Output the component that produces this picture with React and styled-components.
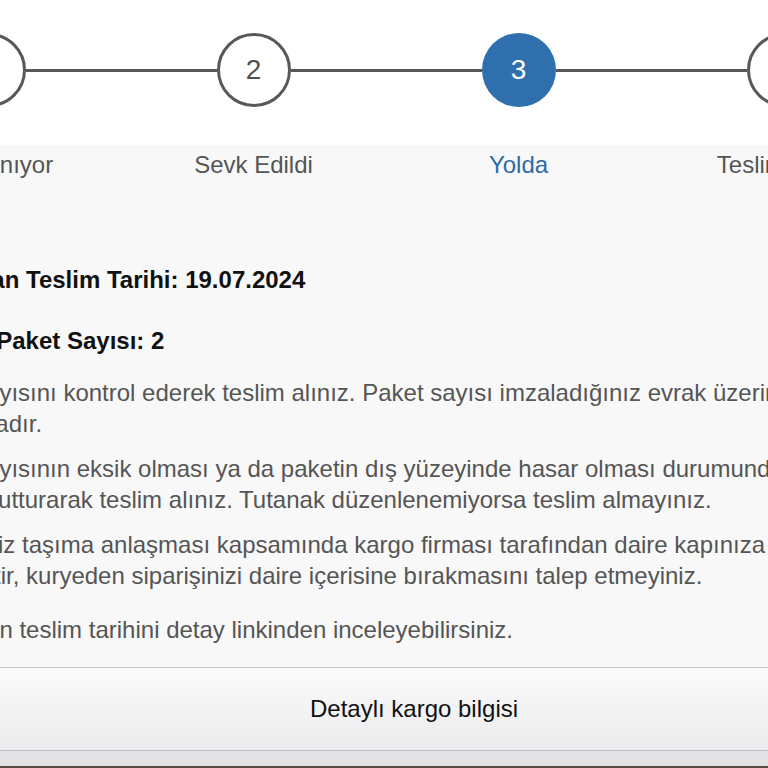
import styled, { createGlobalStyle } from 'styled-components';
import { Fragment } from 'react';

const GlobalStyle = createGlobalStyle`
  html, body { margin:0; padding:0; }
  body { font-family:"Liberation Sans", Arial, sans-serif; background:#f8f8f8; }
`;

let Page = styled.div`
  width:768px; height:768px; overflow:hidden; background:#f8f8f8;
  display:flex; flex-flow:column;
`;

let Track = styled.div`
  width:1060px; margin-left:-144px; flex-shrink:0;
`;

let CircleRow = styled.div`
  height:145px; box-sizing:border-box; padding:33px 95.5px 0;
  background:#fff; display:flex; align-items:flex-start;
`;

let Circle = styled.div`
  width:74px; height:74px; box-sizing:border-box; border-radius:50%; flex-shrink:0;
  display:flex; justify-content:center; align-items:center;
  font-size:28px; line-height:1;
  border:${p => p.$active ? 'none' : '3px solid #585858'};
  background:${p => p.$active ? '#2f6fae' : '#fff'};
  color:${p => p.$active ? '#fff' : '#505050'};
`;

let Connector = styled.div`
  flex:1; height:3px; background:#585858; margin-top:35.5px;
`;

let LabelRow = styled.div`
  display:grid; grid-template-columns:repeat(4, 265px); padding-top:5px;
`;

let Label = styled.div`
  text-align:center; font-size:24px; line-height:30px; white-space:nowrap;
  color:${p => p.$active ? '#2e6aa8' : '#555'};
`;

let Content = styled.div`
  padding:84px 0 0 50px;
`;

let Heading = styled.h3`
  margin:0 0 ${p => p.$gap}px; font-size:24px; line-height:31px; font-weight:700;
  color:#111; white-space:nowrap;
`;

let Para = styled.p`
  margin:${p => p.$top || 0}px 0 14px; font-size:24px; line-height:31px;
  color:#555; white-space:nowrap;
`;

let Divider = styled.div`
  height:1px; background:#c8c8cb; margin-top:8px;
`;

let DetailButton = styled.button`
  display:flex; justify-content:center; align-items:center;
  width:100%; height:83px; box-sizing:border-box; padding:0 0 0 60px;
  border:none; border-bottom:1px solid #bdbdc1; margin:0;
  background:linear-gradient(#fbfbfb, #ebebed);
  font-family:inherit; font-size:24px; color:#111; cursor:pointer;
`;

let Strip = styled.div`
  flex:1; min-height:14px; background:#e4e4e7; border-bottom:2px solid #5a4a41;
`;

const steps = [
  { n: 1, label: 'Hazırlanıyor' },
  { n: 2, label: 'Sevk Edildi' },
  { n: 3, label: 'Yolda', active: true },
  { n: 4, label: 'Teslim Edildi' },
];

export default function App() {
  return (
    <Page>
      <GlobalStyle />
      <Track>
        <CircleRow>
          {steps.map((s, i) => (
            <Fragment key={s.n}>
              {i > 0 && <Connector />}
              <Circle $active={s.active}>{s.n}</Circle>
            </Fragment>
          ))}
        </CircleRow>
        <LabelRow>
          {steps.map(s => <Label key={s.n} $active={s.active}>{s.label}</Label>)}
        </LabelRow>
        <Content>
          <Heading $gap={30}>Planlanan Teslim Tarihi: 19.07.2024</Heading>
          <Heading $gap={21}>Toplam Paket Sayısı: 2</Heading>
          <Para>Paket sayısını kontrol ederek teslim alınız. Paket sayısı imzaladığınız evrak üzerinde<br />yazmaktadır.</Para>
          <Para>Paket sayısının eksik olması ya da paketin dış yüzeyinde hasar olması durumunda<br />tutanak tutturarak teslim alınız. Tutanak düzenlenemiyorsa teslim almayınız.</Para>
          <Para>Siparişiniz taşıma anlaşması kapsamında kargo firması tarafından daire kapınıza kadar<br />edilecektir, kuryeden siparişinizi daire içerisine bırakmasını talep etmeyiniz.</Para>
          <Para $top={23}>Planlanan teslim tarihini detay linkinden inceleyebilirsiniz.</Para>
        </Content>
      </Track>
      <Divider />
      <DetailButton>Detaylı kargo bilgisi</DetailButton>
      <Strip />
    </Page>
  );
}
